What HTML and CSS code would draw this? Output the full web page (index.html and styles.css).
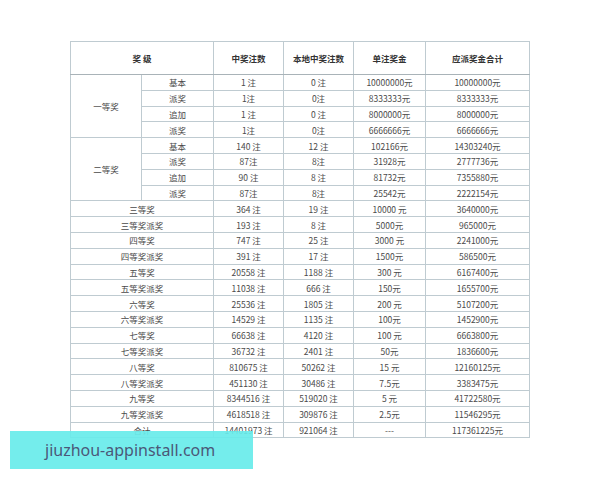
FILE: index.html
```html
<!DOCTYPE html>
<html lang="zh">
<head>
<meta charset="utf-8">
<link rel="stylesheet" href="styles.css">
</head>
<body>
<div class="page">
<table class="prize">
<colgroup>
<col class="c1"><col class="c2"><col class="c3"><col class="c4"><col class="c5"><col class="c6">
</colgroup>
<thead>
<tr><th colspan="2">奖 级</th><th>中奖注数</th><th>本地中奖注数</th><th>单注奖金</th><th>应派奖金合计</th></tr>
</thead>
<tbody>
<tr><td rowspan="4">一等奖</td><td>基本</td><td>1 注</td><td>0 注</td><td>10000000元</td><td>10000000元</td></tr>
<tr><td>派奖</td><td>1注</td><td>0注</td><td>8333333元</td><td>8333333元</td></tr>
<tr><td>追加</td><td>1 注</td><td>0 注</td><td>8000000元</td><td>8000000元</td></tr>
<tr><td>派奖</td><td>1注</td><td>0注</td><td>6666666元</td><td>6666666元</td></tr>
<tr><td rowspan="4">二等奖</td><td>基本</td><td>140 注</td><td>12 注</td><td>102166元</td><td>14303240元</td></tr>
<tr><td>派奖</td><td>87注</td><td>8注</td><td>31928元</td><td>2777736元</td></tr>
<tr><td>追加</td><td>90 注</td><td>8 注</td><td>81732元</td><td>7355880元</td></tr>
<tr><td>派奖</td><td>87注</td><td>8注</td><td>25542元</td><td>2222154元</td></tr>
<tr><td colspan="2">三等奖</td><td>364 注</td><td>19 注</td><td>10000 元</td><td>3640000元</td></tr>
<tr><td colspan="2">三等奖派奖</td><td>193 注</td><td>8 注</td><td>5000元</td><td>965000元</td></tr>
<tr><td colspan="2">四等奖</td><td>747 注</td><td>25 注</td><td>3000 元</td><td>2241000元</td></tr>
<tr><td colspan="2">四等奖派奖</td><td>391 注</td><td>17 注</td><td>1500元</td><td>586500元</td></tr>
<tr><td colspan="2">五等奖</td><td>20558 注</td><td>1188 注</td><td>300 元</td><td>6167400元</td></tr>
<tr><td colspan="2">五等奖派奖</td><td>11038 注</td><td>666 注</td><td>150元</td><td>1655700元</td></tr>
<tr><td colspan="2">六等奖</td><td>25536 注</td><td>1805 注</td><td>200 元</td><td>5107200元</td></tr>
<tr><td colspan="2">六等奖派奖</td><td>14529 注</td><td>1135 注</td><td>100元</td><td>1452900元</td></tr>
<tr><td colspan="2">七等奖</td><td>66638 注</td><td>4120 注</td><td>100 元</td><td>6663800元</td></tr>
<tr><td colspan="2">七等奖派奖</td><td>36732 注</td><td>2401 注</td><td>50元</td><td>1836600元</td></tr>
<tr><td colspan="2">八等奖</td><td>810675 注</td><td>50262 注</td><td>15 元</td><td>12160125元</td></tr>
<tr><td colspan="2">八等奖派奖</td><td>451130 注</td><td>30486 注</td><td>7.5元</td><td>3383475元</td></tr>
<tr><td colspan="2">九等奖</td><td>8344516 注</td><td>519020 注</td><td>5 元</td><td>41722580元</td></tr>
<tr><td colspan="2">九等奖派奖</td><td>4618518 注</td><td>309876 注</td><td>2.5元</td><td>11546295元</td></tr>
<tr><td colspan="2">合计</td><td>14401973 注</td><td>921064 注</td><td>---</td><td>117361225元</td></tr>
</tbody>
</table>
<div class="watermark">jiuzhou-appinstall.com</div>
</div>
</body>
</html>
```

FILE: styles.css
```css
html, body {
  margin: 0;
  padding: 0;
  background: #ffffff;
}
.page {
  position: relative;
  width: 600px;
  height: 480px;
  padding: 41px 0 0 70px;
  box-sizing: border-box;
}
.prize {
  border-collapse: collapse;
  table-layout: fixed;
  width: 459px;
  border: 1px solid #a6b5bd;
  font-family: "Noto Sans CJK SC", "Noto Sans", sans-serif;
  font-size: 8.5px;
  color: #4a4a4a;
}
.c1 { width: 71px; }
.c2 { width: 72px; }
.c3 { width: 70px; }
.c4 { width: 70px; }
.c5 { width: 72px; }
.c6 { width: 104px; }
.prize th,
.prize td {
  border: 1px solid #bfcbd1;
  text-align: center;
  vertical-align: middle;
  padding: 0;
  line-height: 10px;
}
.prize th {
  height: 32px;
  font-weight: bold;
  color: #333;
  border-bottom-color: #a9b3b8;
}
.prize td {
  height: 14.8px;
}
.watermark {
  position: absolute;
  left: 10px;
  top: 431px;
  width: 243px;
  height: 38px;
  box-sizing: border-box;
  padding-left: 35px;
  background: rgba(104, 236, 234, 0.92);
  font-family: "Noto Sans", sans-serif;
  font-size: 16px;
  line-height: 38px;
  color: #4b5878;
}
```
